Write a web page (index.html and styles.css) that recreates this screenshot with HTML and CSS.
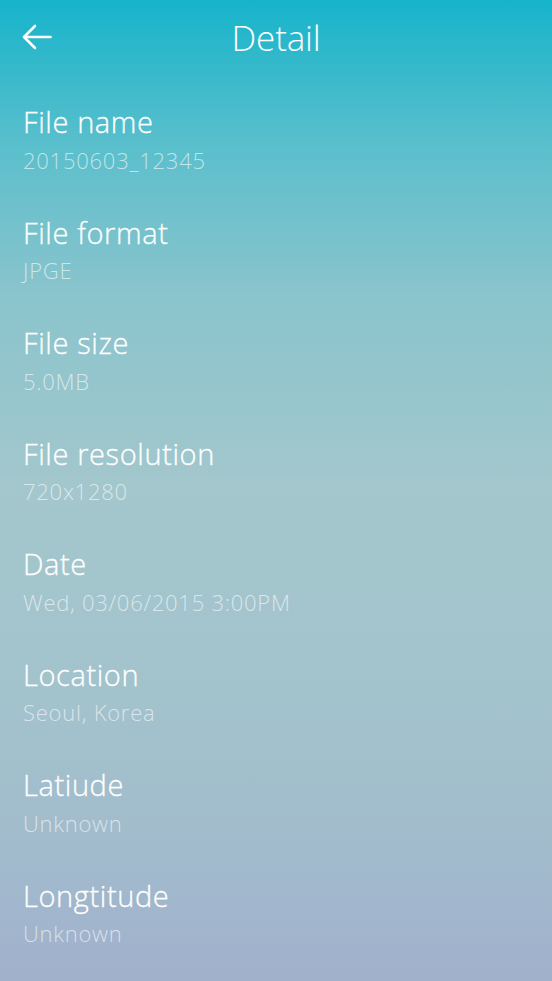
FILE: index.html
```html
<!DOCTYPE html>
<html>
<head>
<meta charset="utf-8">
<link rel="stylesheet" href="styles.css">
</head>
<body>
<div class="screen">
  <header class="header">
    <button class="back" aria-label="Back">
      <svg width="30" height="26" viewBox="0 0 30 26" fill="none" stroke="#fff" stroke-width="2.6" stroke-linecap="round" stroke-linejoin="round">
        <path d="M28.5 13H2.5"/>
        <path d="M13 2L2 13l11 11"/>
      </svg>
    </button>
    <h1 class="title">Detail</h1>
  </header>
  <ul class="list">
    <li class="item"><div class="label">File name</div><div class="value">20150603_12345</div></li>
    <li class="item"><div class="label">File format</div><div class="value">JPGE</div></li>
    <li class="item"><div class="label">File size</div><div class="value">5.0MB</div></li>
    <li class="item"><div class="label">File resolution</div><div class="value">720x1280</div></li>
    <li class="item"><div class="label">Date</div><div class="value">Wed, 03/06/2015 3:00PM</div></li>
    <li class="item"><div class="label">Location</div><div class="value">Seoul, Korea</div></li>
    <li class="item"><div class="label">Latiude</div><div class="value">Unknown</div></li>
    <li class="item"><div class="label">Longtitude</div><div class="value">Unknown</div></li>
  </ul>
</div>
</body>
</html>
```
FILE: styles.css
```css
html, body {
  margin: 0;
  padding: 0;
}
body {
  font-family: "Open Sans", "DejaVu Sans", sans-serif;
  font-weight: 300;
  color: #fff;
}
.screen {
  width: 552px;
  height: 981px;
  overflow: hidden;
  background: linear-gradient(to bottom, #16b4cb 0%, #5bbfcc 15%, #8ac4cc 30%, #a3c7cc 50%, #a3c3cc 70%, #a2bccc 85%, #a1b1cc 100%);
}
.header {
  position: relative;
  height: 76px;
  display: flex;
  align-items: center;
  justify-content: center;
}
.back {
  position: absolute;
  left: 22px;
  top: 24px;
  padding: 0;
  margin: 0;
  border: 0;
  background: none;
  display: flex;
}
.title {
  margin: 0;
  font-size: 35px;
  font-weight: 300;
  line-height: 40px;
  letter-spacing: -0.2px;
  color: #fff;
}
.list {
  list-style: none;
  margin: 0;
  padding: 29px 0 0 23px;
}
.item {
  height: 110.5px;
  display: flex;
  flex-direction: column;
}
.label {
  font-size: 29px;
  font-weight: 300;
  line-height: 34px;
  color: #fff;
  letter-spacing: 0.6px;
  -webkit-text-stroke: 0.3px #fff;
}
.value {
  margin-top: 6.5px;
  font-size: 22px;
  font-weight: 300;
  line-height: 28px;
  color: rgba(255, 255, 255, 0.6);
  letter-spacing: 0.75px;
}
```
